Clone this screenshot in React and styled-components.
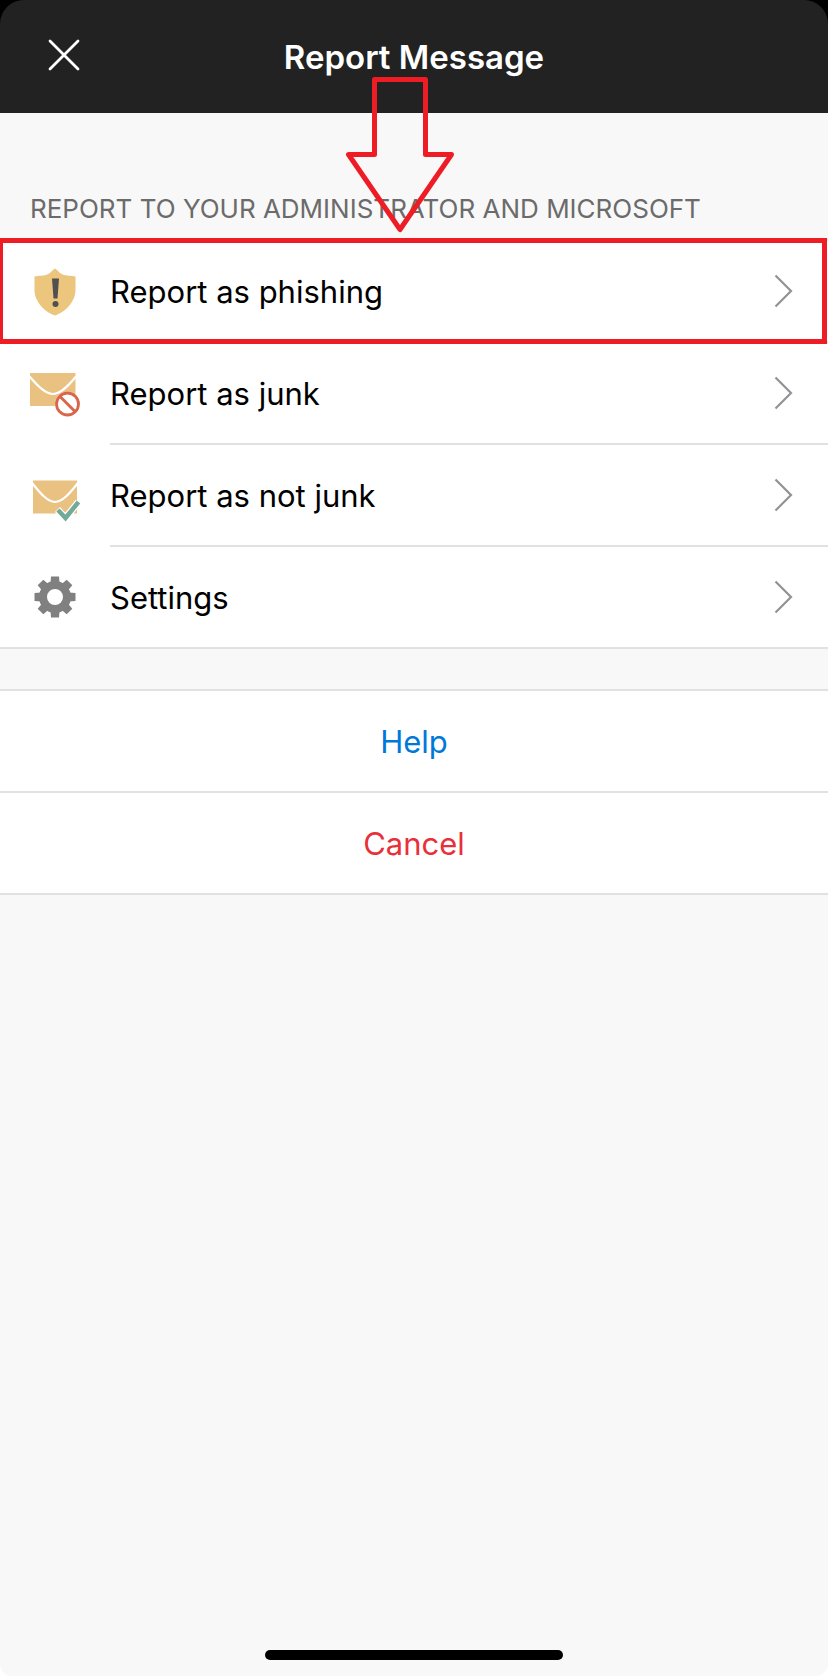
import React from 'react';
import styled, { createGlobalStyle } from 'styled-components';

const GlobalStyle = createGlobalStyle`
    * {
        box-sizing: border-box;
    }
    body {
        margin: 0;
        background: white;
        font-family: Inter, "Liberation Sans", sans-serif;
    }
    button {
        font: inherit;
        border: none;
        background: none;
        cursor: pointer;
    }
`

const Screen = styled.div`
    position: relative;
    display: flex;
    flex-direction: column;
    min-height: 100vh;
    background: #f8f8f8;
    border-radius: 0 0 12px 12px;
`

const HeaderBack = styled.div`
    background: black;
`

const Header = styled.header`
    display: grid;
    grid-template-columns: 80px 1fr 80px;
    align-items: center;
    height: 113px;
    padding: 0 24px;
    background: #222222;
    border-radius: 24px 24px 0 0;
`

const CloseButton = styled.button`
    display: flex;
    justify-content: center;
    width: 80px;
    padding: 20px 20px 24px;
    color: white;
`

const Title = styled.h1`
    margin: 0;
    color: white;
    font-size: 33px;
    font-weight: 600;
    line-height: 40px;
    text-align: center;
`

const Caption = styled.h2`
    margin: 0;
    padding: 80px 30px 14px;
    color: #6b6b6b;
    font-size: 26px;
    font-weight: 400;
    line-height: 32px;
`

const Group = styled.div`
    background: white;
    border-top: 2px solid #e1e1e1;
    margin-bottom: 40px;
`

const Row = styled.button`
    position: relative;
    display: flex;
    align-items: center;
    width: 100%;
    padding: 0 0 0 28px;
    color: black;
    text-align: left;
    border-bottom: ${props => props.$last ? "2px solid #e1e1e1" : "none"};

    &::after {
        content: "";
        display: ${props => props.$marked ? "block" : "none"};
        position: absolute;
        inset: -3px 1px -1px 0;
        border: 5px solid #ee1c24;
        border-left-width: 3px;
        z-index: 1;
    }
`

const RowBody = styled.span`
    flex: 1;
    display: flex;
    align-items: center;
    justify-content: space-between;
    height: ${props => props.$last ? "100px" : "102px"};
    margin-left: 30px;
    padding-right: 35px;
    border-bottom: ${props => props.$last ? "none" : "2px solid #e1e1e1"};
`

const Label = styled.span`
    padding-top: 2px;
    font-size: 31px;
    line-height: 40px;
`

const ActionButton = styled.button`
    display: block;
    width: 100%;
    height: 102px;
    padding: 2px 0 0;
    border-bottom: 2px solid #e1e1e1;
    color: ${props => props.$color};
    font-size: 31px;
    line-height: 40px;
    text-align: center;
`

const HomeBar = styled.div`
    width: 36%;
    height: 10px;
    margin: auto auto 16px;
    background: black;
    border-radius: 5px;
`

const Arrow = styled.svg`
    position: absolute;
    top: 70px;
    left: calc(50% - 74px);
    pointer-events: none;
    z-index: 2;
`

const CloseIcon = () => (
    <svg width="32" height="32" viewBox="0 0 32 32" fill="none" stroke="currentColor" strokeWidth="2.8" strokeLinecap="round" aria-hidden="true">
        <path d="M2 2L30 30M30 2L2 30" />
    </svg>
)

const Chevron = () => (
    <svg width="20" height="34" viewBox="0 0 20 34" fill="none" stroke="#929297" strokeWidth="2.2" aria-hidden="true">
        <path d="M2.5 1.5L18 17L2.5 32.5" />
    </svg>
)

const ShieldIcon = () => (
    <svg width="52" height="52" viewBox="0 0 52 52" aria-hidden="true">
        <path d="M27 2.500C30 4 31 7.500 36 9C40 10.200 43 9.500 47.500 10.500V24C47.500 35 38 46 27 49.500C16 46 6.500 35 6.500 24V10.500C11 9.500 14 10.200 18 9C23 7.500 24 4 27 2.500Z" fill="#ecc67c" />
        <path d="M24 12.500H31L29.500 32.500H25.500Z" fill="#505050" />
        <circle cx="27.500" cy="38" r="3" fill="#505050" />
    </svg>
)

const JunkIcon = () => (
    <svg width="52" height="52" viewBox="0 0 52 52" fill="none" aria-hidden="true">
        <rect x="2" y="5" width="45.500" height="33" fill="#e9c181" />
        <path d="M1.500 8.500C9 17 17 26 25 26S41 17 48 8.500" stroke="white" strokeWidth="2.200" />
        <circle cx="39.500" cy="36" r="12.500" fill="white" />
        <circle cx="39.500" cy="36" r="11" stroke="#d9664a" strokeWidth="2.800" />
        <path d="M32 28.500L47 43.500" stroke="#d9664a" strokeWidth="2.800" />
    </svg>
)

const NotJunkIcon = () => (
    <svg width="52" height="52" viewBox="0 0 52 52" fill="none" aria-hidden="true">
        <rect x="5" y="10.500" width="44" height="33" fill="#e9c181" />
        <path d="M4.500 13.500C12 23 19.500 32 27 32S42 23 49.500 13.500" stroke="white" strokeWidth="2.200" />
        <path d="M29.500 39.500L37.500 48L50.500 32" stroke="white" strokeWidth="7" />
        <path d="M30 40L37.500 48L50.500 32" stroke="#72a999" strokeWidth="4.500" />
    </svg>
)

const GearIcon = () => (
    <svg width="52" height="52" viewBox="0 0 52 52" aria-hidden="true">
        <g fill="#808080">
            {[0, 45, 90, 135].map(angle => (
                <path key={angle} d="M23 5.500H31L31.500 12H22.500ZM22.500 40H31.500L31 46.500H23Z" transform={`rotate(${angle} 27 26)`} />
            ))}
        </g>
        <circle cx="27" cy="26" r="12" fill="none" stroke="#808080" strokeWidth="8" />
    </svg>
)

const reports = [
    { name: "Report as phishing", Icon: ShieldIcon, marked: true },
    { name: "Report as junk", Icon: JunkIcon },
    { name: "Report as not junk", Icon: NotJunkIcon },
    { name: "Settings", Icon: GearIcon },
]

const App = () => {
    return (
        <Screen>
            <GlobalStyle />
            <HeaderBack>
                <Header>
                    <CloseButton type="button" aria-label="Close"><CloseIcon /></CloseButton>
                    <Title>Report Message</Title>
                </Header>
            </HeaderBack>
            <Caption>REPORT TO YOUR ADMINISTRATOR AND MICROSOFT</Caption>
            <Group>
                {reports.map(({ name, Icon, marked }, index) => {
                    const last = index === reports.length - 1;
                    return (
                        <Row key={name} type="button" $marked={marked} $last={last}>
                            <Icon />
                            <RowBody $last={last}>
                                <Label>{name}</Label>
                                <Chevron />
                            </RowBody>
                        </Row>
                    )
                })}
            </Group>
            <Group>
                <ActionButton type="button" $color="#0078d7">Help</ActionButton>
                <ActionButton type="button" $color="#e8303a">Cancel</ActionButton>
            </Group>
            <HomeBar />
            <Arrow width="120" height="170" viewBox="0 0 120 170" fill="none" stroke="#ee1c24" strokeWidth="5" strokeLinejoin="round" aria-hidden="true">
                <path d="M34.500 9.500H85.500V84.500H111.500L60 159.500L8.500 84.500H34.500Z" />
            </Arrow>
        </Screen>
    )
}

export default App;
